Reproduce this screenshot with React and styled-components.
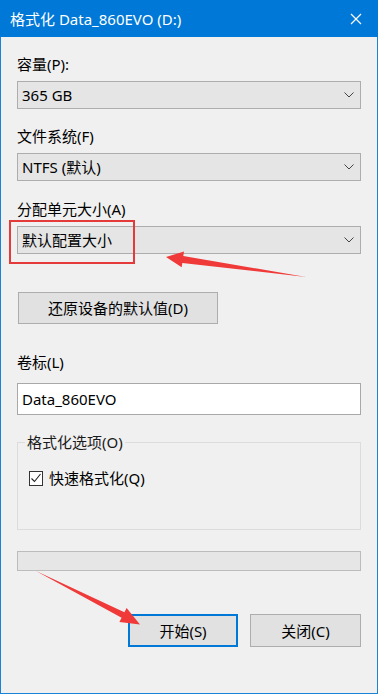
import styled, { createGlobalStyle } from "styled-components";

const GlobalStyle = createGlobalStyle`
  html, body {
    margin: 0;
    padding: 0;
    background: #f0f0f0;
  }
  * {
    box-sizing: border-box;
  }
`;

const FONT = `"Noto Sans", "Noto Sans CJK SC", sans-serif`;

const Window = styled.div`
  position: relative;
  width: 378px;
  height: 694px;
  background: #f0f0f0;
  border: 1px solid #1883d7;
  border-top: none;
  font-family: ${FONT};
  font-size: 15px;
  color: #000;
  display: flex;
  flex-direction: column;
`;

const TitleBar = styled.div`
  height: 37px;
  margin: 0 -1px;
  background: #0078d7;
  color: #fff;
  display: flex;
  align-items: center;
  justify-content: space-between;
  padding: 0 16px 0 10px;
  font-size: 15px;
`;

const Body = styled.div`
  display: flex;
  flex-direction: column;
  padding: 17px 16px 0 16px;
`;

const Label = styled.div`
  line-height: 20px;
  height: 20px;
  margin-top: ${(p) => p.$mt || 0}px;
  white-space: nowrap;
`;

const Combo = styled.div`
  position: relative;
  height: 28px;
  margin-top: ${(p) => p.$mt || 7}px;
  background: #e5e5e5;
  border: 1px solid #adadad;
  display: flex;
  align-items: center;
  justify-content: space-between;
  padding: 0 6px 0 4px;
  line-height: 20px;
`;

const Highlight = styled.div`
  position: absolute;
  left: -9px;
  top: -7px;
  width: 126px;
  height: 44px;
  border: 2.5px solid #e53a3a;
  pointer-events: none;
`;

const Button = styled.div`
  height: ${(p) => p.$h || 33}px;
  width: ${(p) => p.$w}px;
  margin-top: ${(p) => p.$mt || 0}px;
  margin-left: ${(p) => p.$ml || 0}px;
  background: #e1e1e1;
  border: ${(p) => (p.$primary ? "2px solid #0078d7" : "1px solid #adadad")};
  display: flex;
  align-items: center;
  justify-content: center;
  line-height: 20px;
  white-space: nowrap;
`;

const TextBox = styled.div`
  height: 32px;
  margin-top: 11px;
  background: #fff;
  border: 1px solid #a8a8a8;
  display: flex;
  align-items: center;
  padding: 0 4px;
`;

const Group = styled.fieldset`
  margin: 17px 0 0 0;
  border: 1px solid #dcdcdc;
  padding: 16px 10px 41px 11px;
  min-width: 0;
`;

const Legend = styled.legend`
  padding: 0 2px;
  margin-left: -4px;
  line-height: 20px;
  color: #1a1a1a;
`;

const CheckRow = styled.label`
  display: flex;
  align-items: center;
  gap: 6px;
  height: 20px;
  line-height: 20px;
`;

const CheckBox = styled.span`
  width: 14px;
  height: 15px;
  border: 1px solid #333;
  background: #fff;
  display: flex;
  align-items: center;
  justify-content: center;
`;

const Progress = styled.div`
  height: 20px;
  margin-top: 21px;
  background: #e6e6e6;
  border: 1px solid #bcbcbc;
`;

const ButtonRow = styled.div`
  display: flex;
  justify-content: flex-end;
  gap: 12px;
  margin-top: 43px;
`;

const Overlay = styled.svg`
  position: absolute;
  left: 0;
  top: 0;
  pointer-events: none;
`;

const Chevron = () => (
  <svg width="10" height="6" viewBox="0 0 10 6">
    <path d="M0.5 0.5 L5 5 L9.5 0.5" fill="none" stroke="#444" strokeWidth="1" />
  </svg>
);

const CloseIcon = () => (
  <svg width="12" height="12" viewBox="0 0 12 12">
    <path d="M1 1 L11 11 M11 1 L1 11" stroke="#fff" strokeWidth="1.2" />
  </svg>
);

const Check = () => (
  <svg width="12" height="12" viewBox="0 0 12 12">
    <path d="M1.5 6.5 L4.5 9.5 L10.5 2" fill="none" stroke="#222" strokeWidth="1.1" />
  </svg>
);

const App = () => {
  return (
    <>
      <GlobalStyle />
      <Window>
        <TitleBar>
          <span>格式化 Data_860EVO (D:)</span>
          <CloseIcon />
        </TitleBar>
        <Body>
          <Label>容量(P):</Label>
          <Combo>
            <span>365 GB</span>
            <Chevron />
          </Combo>

          <Label $mt={17}>文件系统(F)</Label>
          <Combo>
            <span>NTFS (默认)</span>
            <Chevron />
          </Combo>

          <Label $mt={18}>分配单元大小(A)</Label>
          <Combo>
            <span>默认配置大小</span>
            <Chevron />
            <Highlight />
          </Combo>

          <Button $w={200} $h={32} $mt={38} $ml={1}>
            还原设备的默认值(D)
          </Button>

          <Label $mt={28}>卷标(L)</Label>
          <TextBox>Data_860EVO</TextBox>

          <Group>
            <Legend>格式化选项(O)</Legend>
            <CheckRow>
              <CheckBox>
                <Check />
              </CheckBox>
              <span>快速格式化(Q)</span>
            </CheckRow>
          </Group>

          <Progress />

          <ButtonRow>
            <Button $w={110} $primary>
              开始(S)
            </Button>
            <Button $w={111}>关闭(C)</Button>
          </ButtonRow>
        </Body>

        <Overlay width="378" height="694" viewBox="0 0 378 694">
          <polygon
            points="165,257 183,251.5 182.3,255.9 305,277 181.3,262.9 180.7,267.3"
            fill="#f03a3a"
          />
          <polygon
            points="35,571 123.4,612.3 125.6,608 139,624.5 118.4,622 120.6,617.7"
            fill="#f03a3a"
          />
        </Overlay>
      </Window>
    </>
  );
};

export default App;
